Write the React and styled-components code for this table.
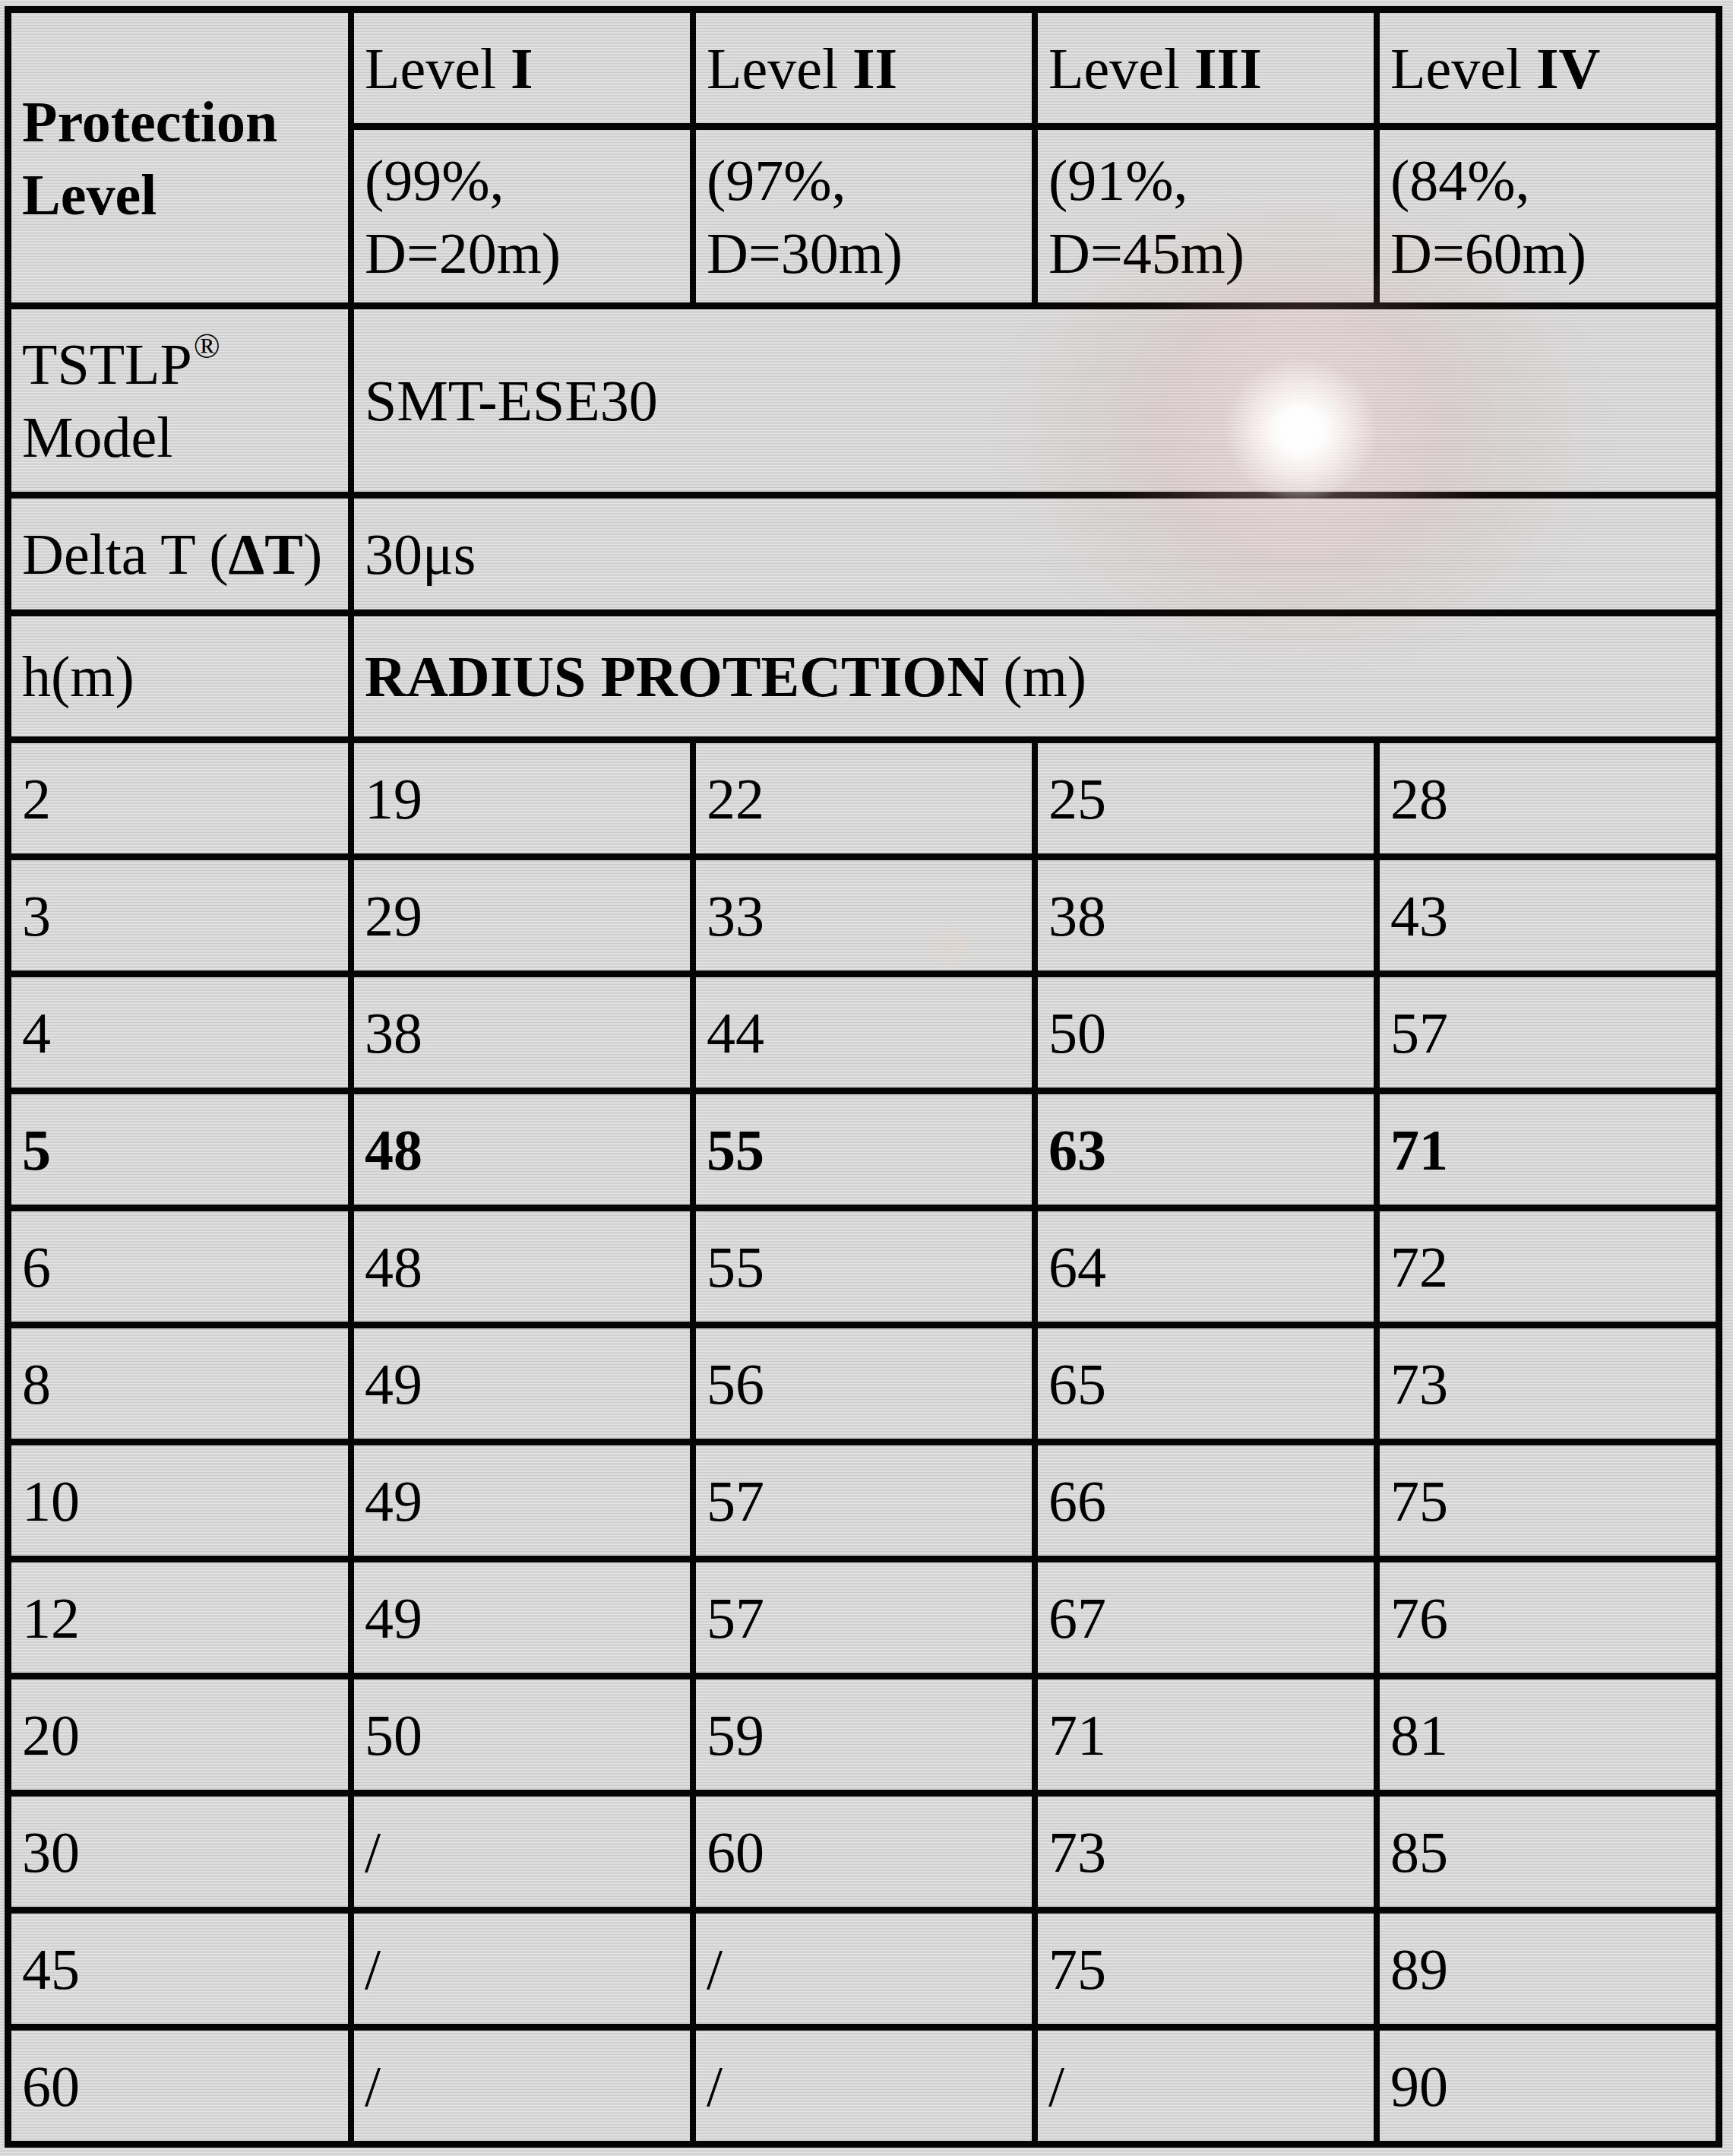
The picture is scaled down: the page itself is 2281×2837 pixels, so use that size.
import React from "react";
import styled, { createGlobalStyle } from "styled-components";

const stripes = `repeating-linear-gradient(180deg, #e5e5e5 0px, #e5e5e5 1px, #cbcbcb 1px, #cbcbcb 2px)`;

const GlobalStyle = createGlobalStyle`
  html, body {
    margin: 0;
    padding: 0;
    background: ${stripes};
    background-attachment: fixed;
  }
  #root {
    width: 2281px;
    height: 2837px;
  }
`;

const Page = styled.div`
  position: relative;
  width: 2281px;
  height: 2837px;
  box-sizing: border-box;
  padding: 8px 0 0 6px;
  overflow: hidden;
  font-family: "Liberation Serif", "Times New Roman", serif;
  color: #000;
`;

const Table = styled.div`
  display: grid;
  grid-template-columns: 443px repeat(4, 442px);
  grid-template-rows: 145px 227px 240px 146px 158px repeat(12, 145px);
  column-gap: 8px;
  row-gap: 9px;
  padding: 9px;
  width: fit-content;
  background: #050505;
`;

const Cell = styled.div`
  grid-column: span ${(p) => p.$span || 1};
  grid-row: span ${(p) => p.$rows || 1};
  display: flex;
  align-items: center;
  box-sizing: border-box;
  padding: 0 14px;
  background: ${stripes};
  background-attachment: fixed;
  font-size: 76px;
  line-height: 96px;
  font-weight: ${(p) => (p.$bold ? 700 : 400)};
  white-space: nowrap;
`;

const CellText = styled.div``;

const B = styled.b`
  font-weight: 700;
`;

const Sup = styled.sup`
  font-size: 46px;
  line-height: 0;
  position: relative;
  top: -8px;
  margin-left: 2px;
`;

const Flare = styled.div`
  position: absolute;
  inset: 0;
  pointer-events: none;
  background:
    radial-gradient(ellipse 100px 95px at 1712px 566px,
      rgba(255, 255, 255, 1) 0%,
      rgba(255, 255, 255, 0.95) 30%,
      rgba(255, 248, 248, 0.55) 65%,
      rgba(255, 245, 245, 0) 100%),
    radial-gradient(ellipse 260px 250px at 1712px 566px,
      rgba(255, 240, 240, 0.4) 0%,
      rgba(250, 220, 220, 0.2) 40%,
      rgba(235, 185, 185, 0.1) 70%,
      rgba(235, 185, 185, 0) 100%),
    radial-gradient(ellipse 420px 330px at 1712px 566px,
      rgba(200, 90, 90, 0.1) 0%,
      rgba(200, 90, 90, 0.06) 60%,
      rgba(200, 90, 90, 0) 100%),
    radial-gradient(circle 30px at 1250px 1245px,
      rgba(245, 205, 170, 0.2) 0%,
      rgba(245, 205, 170, 0) 100%);
`;

const levels = [
  ["I", "(99%,", "D=20m)"],
  ["II", "(97%,", "D=30m)"],
  ["III", "(91%,", "D=45m)"],
  ["IV", "(84%,", "D=60m)"],
];

const rows = [
  ["2", "19", "22", "25", "28"],
  ["3", "29", "33", "38", "43"],
  ["4", "38", "44", "50", "57"],
  ["5", "48", "55", "63", "71", true],
  ["6", "48", "55", "64", "72"],
  ["8", "49", "56", "65", "73"],
  ["10", "49", "57", "66", "75"],
  ["12", "49", "57", "67", "76"],
  ["20", "50", "59", "71", "81"],
  ["30", "/", "60", "73", "85"],
  ["45", "/", "/", "75", "89"],
  ["60", "/", "/", "/", "90"],
];

export default function App() {
  return (
    <>
      <GlobalStyle />
      <Page>
        <Table>
          <Cell $rows={2} $bold>
            <CellText>
              Protection
              <br />
              Level
            </CellText>
          </Cell>
          {levels.map(([lv]) => (
            <Cell key={"l" + lv}>
              <CellText>
                Level <B>{lv}</B>
              </CellText>
            </Cell>
          ))}
          {levels.map(([lv, a, b]) => (
            <Cell key={"p" + lv}>
              <CellText>
                {a}
                <br />
                {b}
              </CellText>
            </Cell>
          ))}

          <Cell>
            <CellText>
              TSTLP<Sup>®</Sup>
              <br />
              Model
            </CellText>
          </Cell>
          <Cell $span={4}>
            <CellText>SMT-ESE30</CellText>
          </Cell>

          <Cell>
            <CellText>
              Delta T (<B>ΔT</B>)
            </CellText>
          </Cell>
          <Cell $span={4}>
            <CellText>30μs</CellText>
          </Cell>

          <Cell>
            <CellText>h(m)</CellText>
          </Cell>
          <Cell $span={4}>
            <CellText>
              <B>RADIUS PROTECTION</B> (m)
            </CellText>
          </Cell>

          {rows.map((r) =>
            r.slice(0, 5).map((v, i) => (
              <Cell key={r[0] + "-" + i} $bold={!!r[5]}>
                <CellText>{v}</CellText>
              </Cell>
            ))
          )}
        </Table>
        <Flare />
      </Page>
    </>
  );
}
